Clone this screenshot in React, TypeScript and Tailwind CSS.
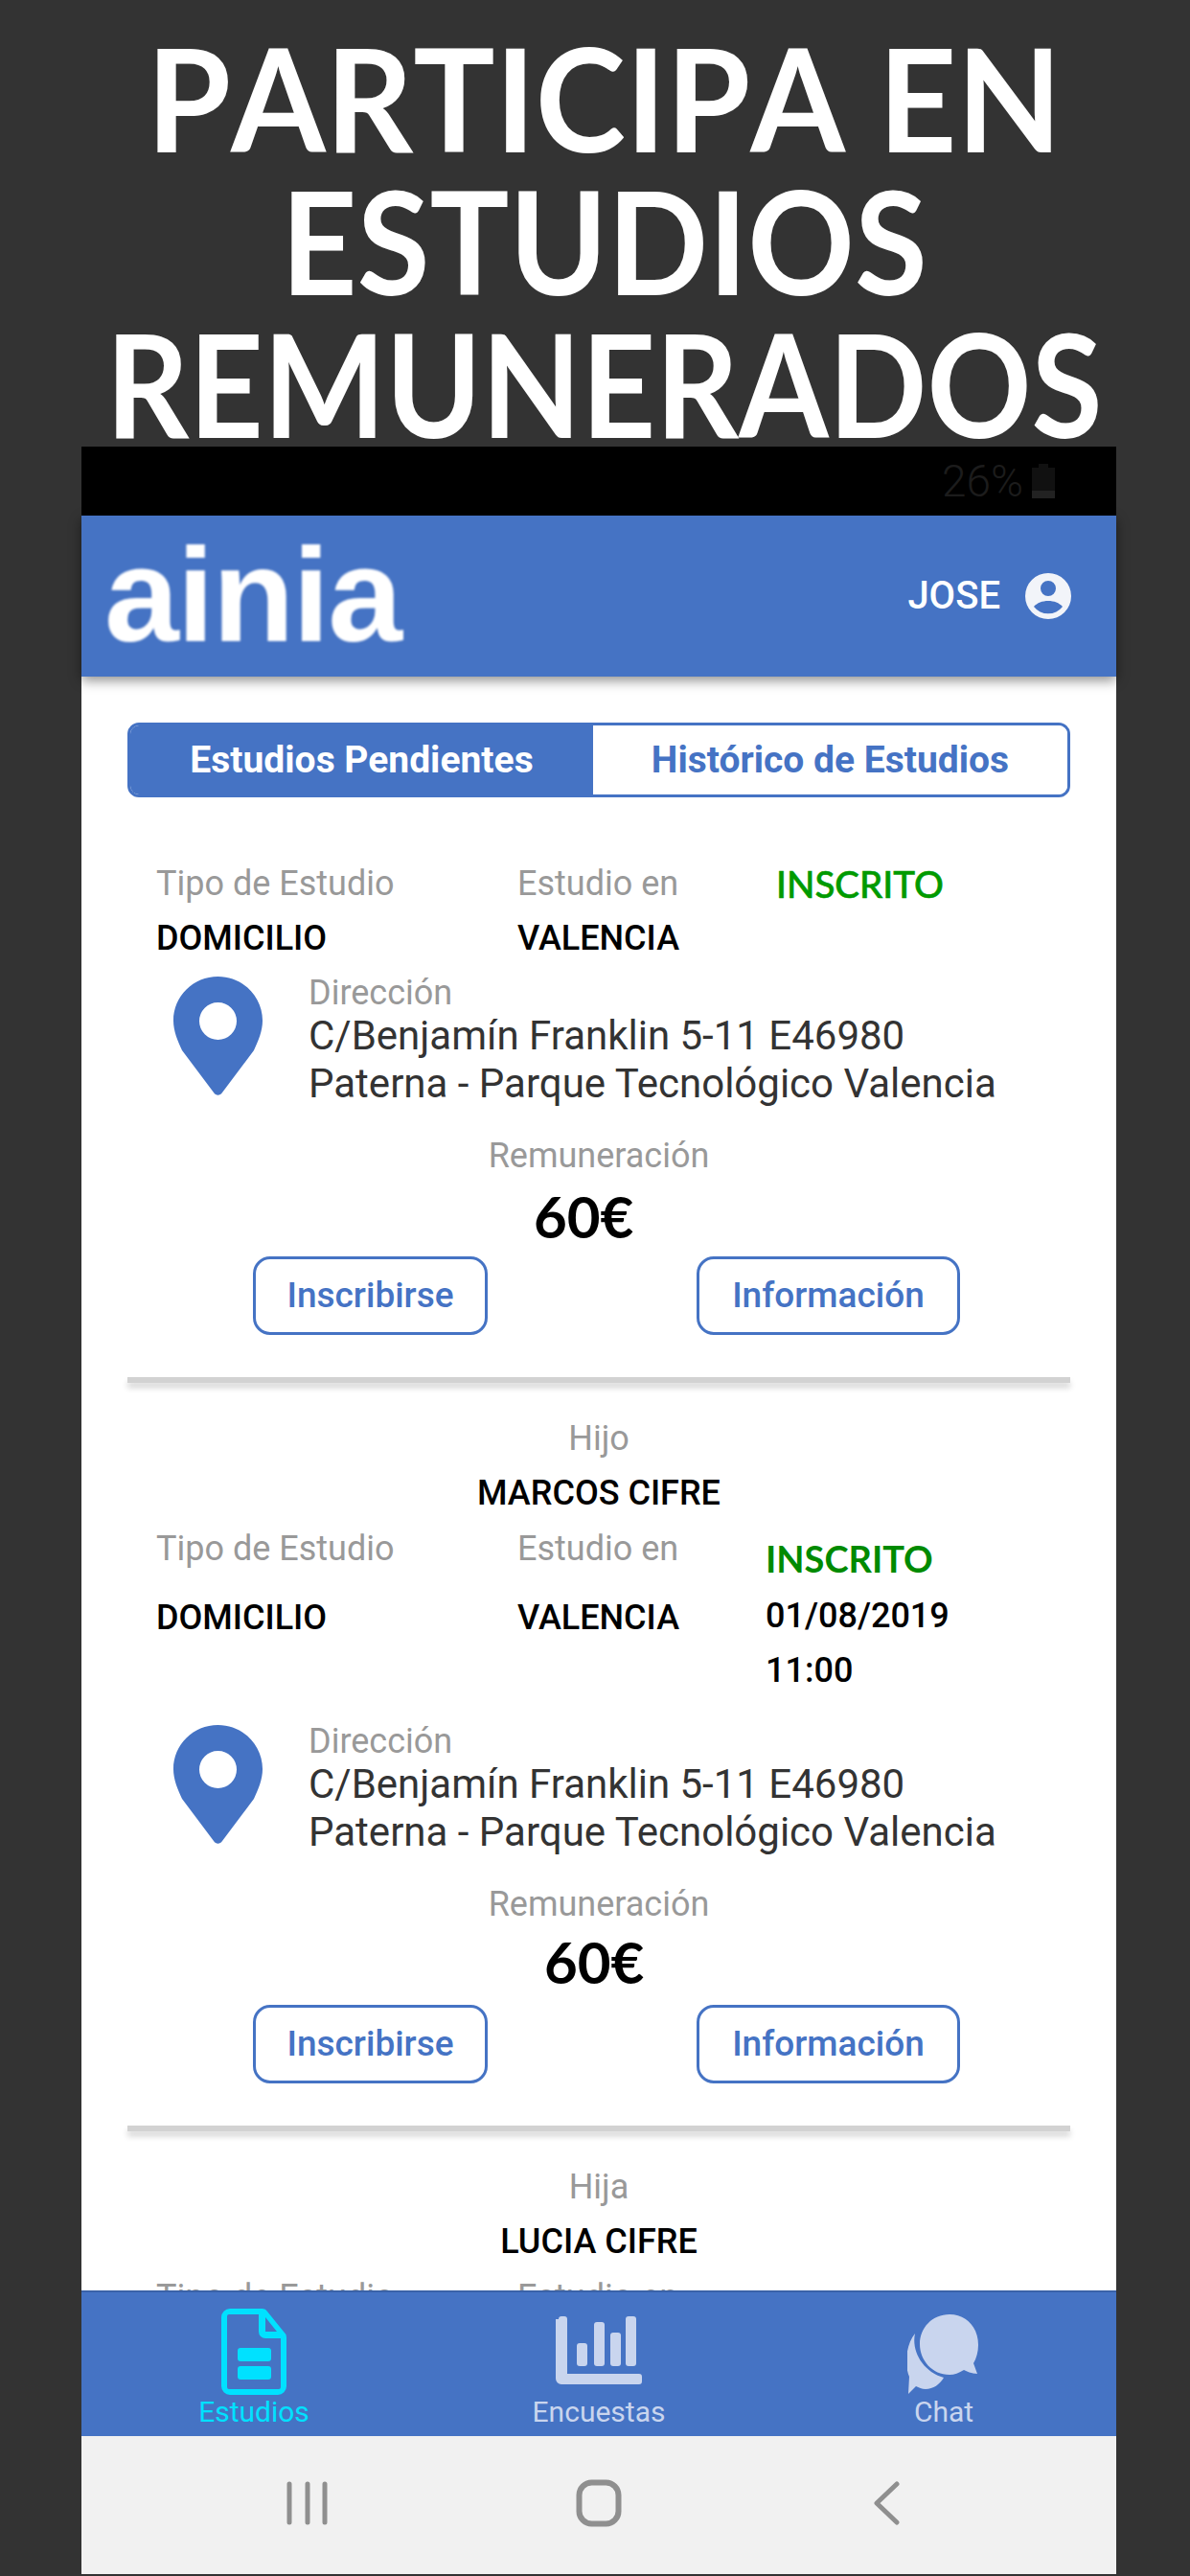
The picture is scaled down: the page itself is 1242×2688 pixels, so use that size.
import React from "react";

function Pin() {
  return (
    <svg width="93" height="124" viewBox="0 0 93 124" className="block">
      <path
        fillRule="evenodd"
        fill="#4573c4"
        d="M46.5 0C20.8 0 0 20.6 0 46c0 11 4.500 21 9 31l33 44c2.300 3.600 6.700 3.600 9 0l33-44c4.500-10 9-20 9-31C93 20.600 72.200 0 46.500 0ZM46.500 27a19.500 19.500 0 1 1 0 39a19.500 19.500 0 0 1 0-39Z"
      />
    </svg>
  );
}

function Study(props: {
  parentLabel?: string;
  parentName?: string;
  inscritoInline?: boolean;
  dateLines?: string[];
  priceClass: string;
  topClass: string;
  dirTop: string;
}) {
  return (
    <div className="flex flex-col">
      {props.parentLabel && (
        <>
          <div className="mt-[38px] h-[40px] leading-[40px] text-center text-[36px] text-[#999999]">{props.parentLabel}</div>
          <div className="mt-[12px] h-[50px] leading-[50px] text-center text-[36px] font-medium text-black">{props.parentName}</div>
        </>
      )}
      <div className={`${props.topClass} flex pl-[30px]`}>
        <div className="w-[377px] flex-none">
          <div className={`${props.inscritoInline ? "h-[57px] leading-[57px]" : "h-[50px] leading-[50px]"} text-[36px] text-[#999999]`}>Tipo de Estudio</div>
          <div className={`${props.inscritoInline ? "" : "mt-[19px]"} h-[57px] leading-[57px] text-[36px] font-medium text-black`}>DOMICILIO</div>
        </div>
        <div className="w-[270px] flex-none">
          <div className={`${props.inscritoInline ? "h-[57px] leading-[57px]" : "h-[50px] leading-[50px]"} text-[36px] text-[#999999]`}>Estudio en</div>
          <div className={`${props.inscritoInline ? "" : "mt-[19px]"} h-[57px] leading-[57px] text-[36px] font-medium text-black`}>VALENCIA</div>
        </div>
        {props.inscritoInline ? (
          <div className="h-[57px] leading-[57px] text-[38.5px] font-['Lato',sans-serif] font-medium text-[#009a00] [-webkit-text-stroke:0.6px_#009a00]">INSCRITO</div>
        ) : (
          <div className="-ml-[11px] mt-[10px]">
            <div className="h-[50px] leading-[50px] text-[38px] font-['Lato',sans-serif] font-bold text-[#008a00]">INSCRITO</div>
            {props.dateLines?.map((l, i) => (
              <div key={l} className={`${i === 0 ? "mt-[7px]" : ""} h-[57px] leading-[57px] text-[36px] font-medium text-black`}>{l}</div>
            ))}
          </div>
        )}
      </div>
      <div className={`${props.dirTop} flex pl-[48px]`}>
        <div className="w-[141px] flex-none pt-[3px]"><Pin /></div>
        <div className="flex flex-col">
          <div className="h-[40px] leading-[40px] text-[36px] text-[#999999]">Dirección</div>
          <div className="h-[50px] leading-[50px] text-[42px] text-[#333333]">C/Benjamín Franklin 5-11 E46980</div>
          <div className="h-[50px] leading-[50px] text-[42px] text-[#333333]">Paterna - Parque Tecnológico Valencia</div>
        </div>
      </div>
      <div className="mt-[30px] h-[40px] leading-[40px] text-center text-[36px] text-[#999999]">Remuneración</div>
      <div className={`h-[80px] leading-[80px] text-[60px] font-['Lato',sans-serif] font-bold text-black ${props.priceClass}`}>60€</div>
      <div className="mt-[5px] flex pl-[131px]">
        <button className="w-[245px] h-[82px] rounded-[18px] border-[3px] border-[#4573c4] bg-white text-[37px] font-medium text-[#4573c4]">Inscribirse</button>
        <button className="ml-[218px] w-[275px] h-[82px] rounded-[18px] border-[3px] border-[#4573c4] bg-white text-[37px] font-medium text-[#4573c4]">Información</button>
      </div>
      <div className="mt-[44px] h-[6px] bg-[#d2d2d2] shadow-[0_5px_6px_rgba(0,0,0,0.18)]" />
    </div>
  );
}

export default function App() {
  return (
    <div className="w-[1242px] h-[2688px] bg-[#333333] flex flex-col overflow-hidden font-['Roboto',sans-serif]">
      <h1 className="w-full h-[466px] pt-[27px] pl-[19px] text-center text-white font-['Lato',sans-serif] font-bold text-[149px] leading-[149px] [font-kerning:none]">
        <div className="scale-x-[0.955]">PARTICIPA EN</div>
        <div className="scale-x-[0.928]">ESTUDIOS</div>
        <div className="scale-x-[0.906]">REMUNERADOS</div>
      </h1>
      <div className="w-[1080px] ml-[85px] flex flex-col">
        <div className="h-[72px] bg-black flex items-center justify-end pr-[64px] gap-[9px]">
          <span className="text-[46px] font-light text-[#1c1c1c] leading-none">26%</span>
          <svg width="24" height="36" viewBox="0 0 24 36">
            <path d="M7 0h10v4h7v32H0V4h7Z" fill="#111111" />
            <path d="M0 28h24v8H0Z" fill="#222222" />
          </svg>
        </div>
        <div className="relative z-10 h-[168px] bg-[#4573c4] shadow-[0_4px_12px_rgba(0,0,0,0.45)] flex items-center justify-between pl-[24px] pr-[47px]">
          <span className="text-[140px] leading-[168px] font-bold text-white font-['Liberation_Sans',sans-serif] tracking-[-2px] blur-[1px] -mt-[2px]">ainia</span>
          <div className="flex items-center gap-[26px]">
            <span className="text-[40px] font-medium text-white">JOSE</span>
            <svg width="48" height="48" viewBox="0 0 48 48">
              <path
                fillRule="evenodd"
                fill="#f2f4f9"
                d="M24 0a24 24 0 1 0 0 48a24 24 0 0 0 0-48ZM24 8a8 8 0 1 1 0 16a8 8 0 0 1 0-16ZM24 29c6 0 11.500 2 15 6a19 19 0 0 1-30 0c3.500-4 9-6 15-6Z"
              />
            </svg>
          </div>
        </div>
        <div className="h-[1684px] bg-white overflow-hidden px-[48px]">
          <div className="mt-[48px] h-[78px] flex rounded-[12px] border-[3px] border-[#4573c4] overflow-hidden">
            <div className="w-[483px] bg-[#4573c4] text-white text-[39px] font-bold flex items-center justify-center">Estudios Pendientes</div>
            <div className="flex-1 bg-white text-[#4573c4] text-[39px] font-bold flex items-center justify-center">Histórico de Estudios</div>
          </div>
          <Study inscritoInline priceClass="pl-[424px] pt-[3px]" topClass="mt-[62px]" dirTop="mt-[8px]" />
          <Study
            parentLabel="Hijo"
            parentName="MARCOS CIFRE"
            dateLines={["01/08/2019", "11:00"]}
            priceClass="pl-[435px]"
            topClass="mt-[8px]"
            dirTop="mt-[25px]"
          />
          <div className="mt-[38px] h-[40px] leading-[40px] text-center text-[36px] text-[#999999]">Hija</div>
          <div className="mt-[12px] h-[50px] leading-[50px] text-center text-[36px] font-medium text-black">LUCIA CIFRE</div>
          <div className="mt-[8px] flex pl-[30px] text-[36px] text-[#999999] leading-[50px]">
            <div className="w-[377px]">Tipo de Estudio</div>
            <div>Estudio en</div>
          </div>
        </div>
        <div className="h-[152px] bg-[#4573c4] border-t-[2px] border-[#3a62a8] flex">
          <div className="w-[360px] flex flex-col items-center pt-[17px] text-[#00e1ff]">
            <svg width="68" height="90" viewBox="0 0 68 90">
              <path
                fillRule="evenodd"
                fill="#00e1ff"
                d="M9 0h34a6 6 0 0 1 5 3l17 21a8 8 0 0 1 3 6v51a9 9 0 0 1-9 9H9a9 9 0 0 1-9-9V9a9 9 0 0 1 9-9ZM8 6a2 2 0 0 0-2 2v74a2 2 0 0 0 2 2h52a2 2 0 0 0 2-2V31H46a7 7 0 0 1-7-7V6ZM46 9v15h12Z"
              />
              <rect x="17" y="41" width="35" height="14" rx="3" fill="#00e1ff" />
              <rect x="17" y="60" width="35" height="14" rx="3" fill="#00e1ff" />
            </svg>
            <span className="text-[30px] leading-[36px]">Estudios</span>
          </div>
          <div className="w-[360px] flex flex-col items-center pt-[17px] text-[#c9d5ee]">
            <svg width="90" height="90" viewBox="0 0 90 90">
              <g fill="#c9d5ee">
                <path d="M3 11a3 3 0 0 1 3-3h3a3 3 0 0 1 3 3v57h75a3 3 0 0 1 3 3v5a3 3 0 0 1-3 3H6a6 6 0 0 1-6-6V11Z" />
                <rect x="22" y="36" width="11" height="24" rx="3" />
                <rect x="40" y="14" width="11" height="46" rx="3" />
                <rect x="57" y="25" width="11" height="35" rx="3" />
                <rect x="73" y="8" width="11" height="52" rx="3" />
              </g>
            </svg>
            <span className="text-[30px] leading-[36px]">Encuestas</span>
          </div>
          <div className="w-[360px] flex flex-col items-center pt-[17px] text-[#c9d5ee]">
            <svg width="76" height="90" viewBox="0 0 76 90">
              <g fill="#c9d5ee">
                <path d="M44 6c18 0 30 14 30 32 0 7-2 14-5 19l4 11c-5 0-10-2-14-4-5 3-10 5-15 5-18 0-31-15-31-32C13 20 26 6 44 6Z" />
                <path d="M8 26C4 44 16 66 38 72c-4 7-11 12-19 12-4 0-7-2-10-3l-8 8 1-18C-3 60-2 38 8 26Z" />
              </g>
            </svg>
            <span className="text-[30px] leading-[36px]">Chat</span>
          </div>
        </div>
        <div className="h-[144px] bg-[#f1f1f1] flex">
          <div className="w-[360px] flex justify-center pl-[112px] pt-[47px]">
            <svg width="46" height="46" viewBox="0 0 46 46">
              <g stroke="#8f8f8f" strokeWidth="5" strokeLinecap="round">
                <path d="M4 3v40M23 3v40M41 3v40" />
              </g>
            </svg>
          </div>
          <div className="w-[360px] flex justify-center pt-[45px]">
            <svg width="48" height="50" viewBox="0 0 48 50">
              <rect x="3.500" y="3.500" width="41" height="43" rx="13" fill="none" stroke="#8f8f8f" strokeWidth="6" />
            </svg>
          </div>
          <div className="w-[360px] flex justify-center pr-[120px] pt-[47px]">
            <svg width="28" height="46" viewBox="0 0 28 46">
              <path d="M25 3 4 23l21 20" fill="none" stroke="#8f8f8f" strokeWidth="5" strokeLinecap="round" strokeLinejoin="round" />
            </svg>
          </div>
        </div>
      </div>
    </div>
  );
}
